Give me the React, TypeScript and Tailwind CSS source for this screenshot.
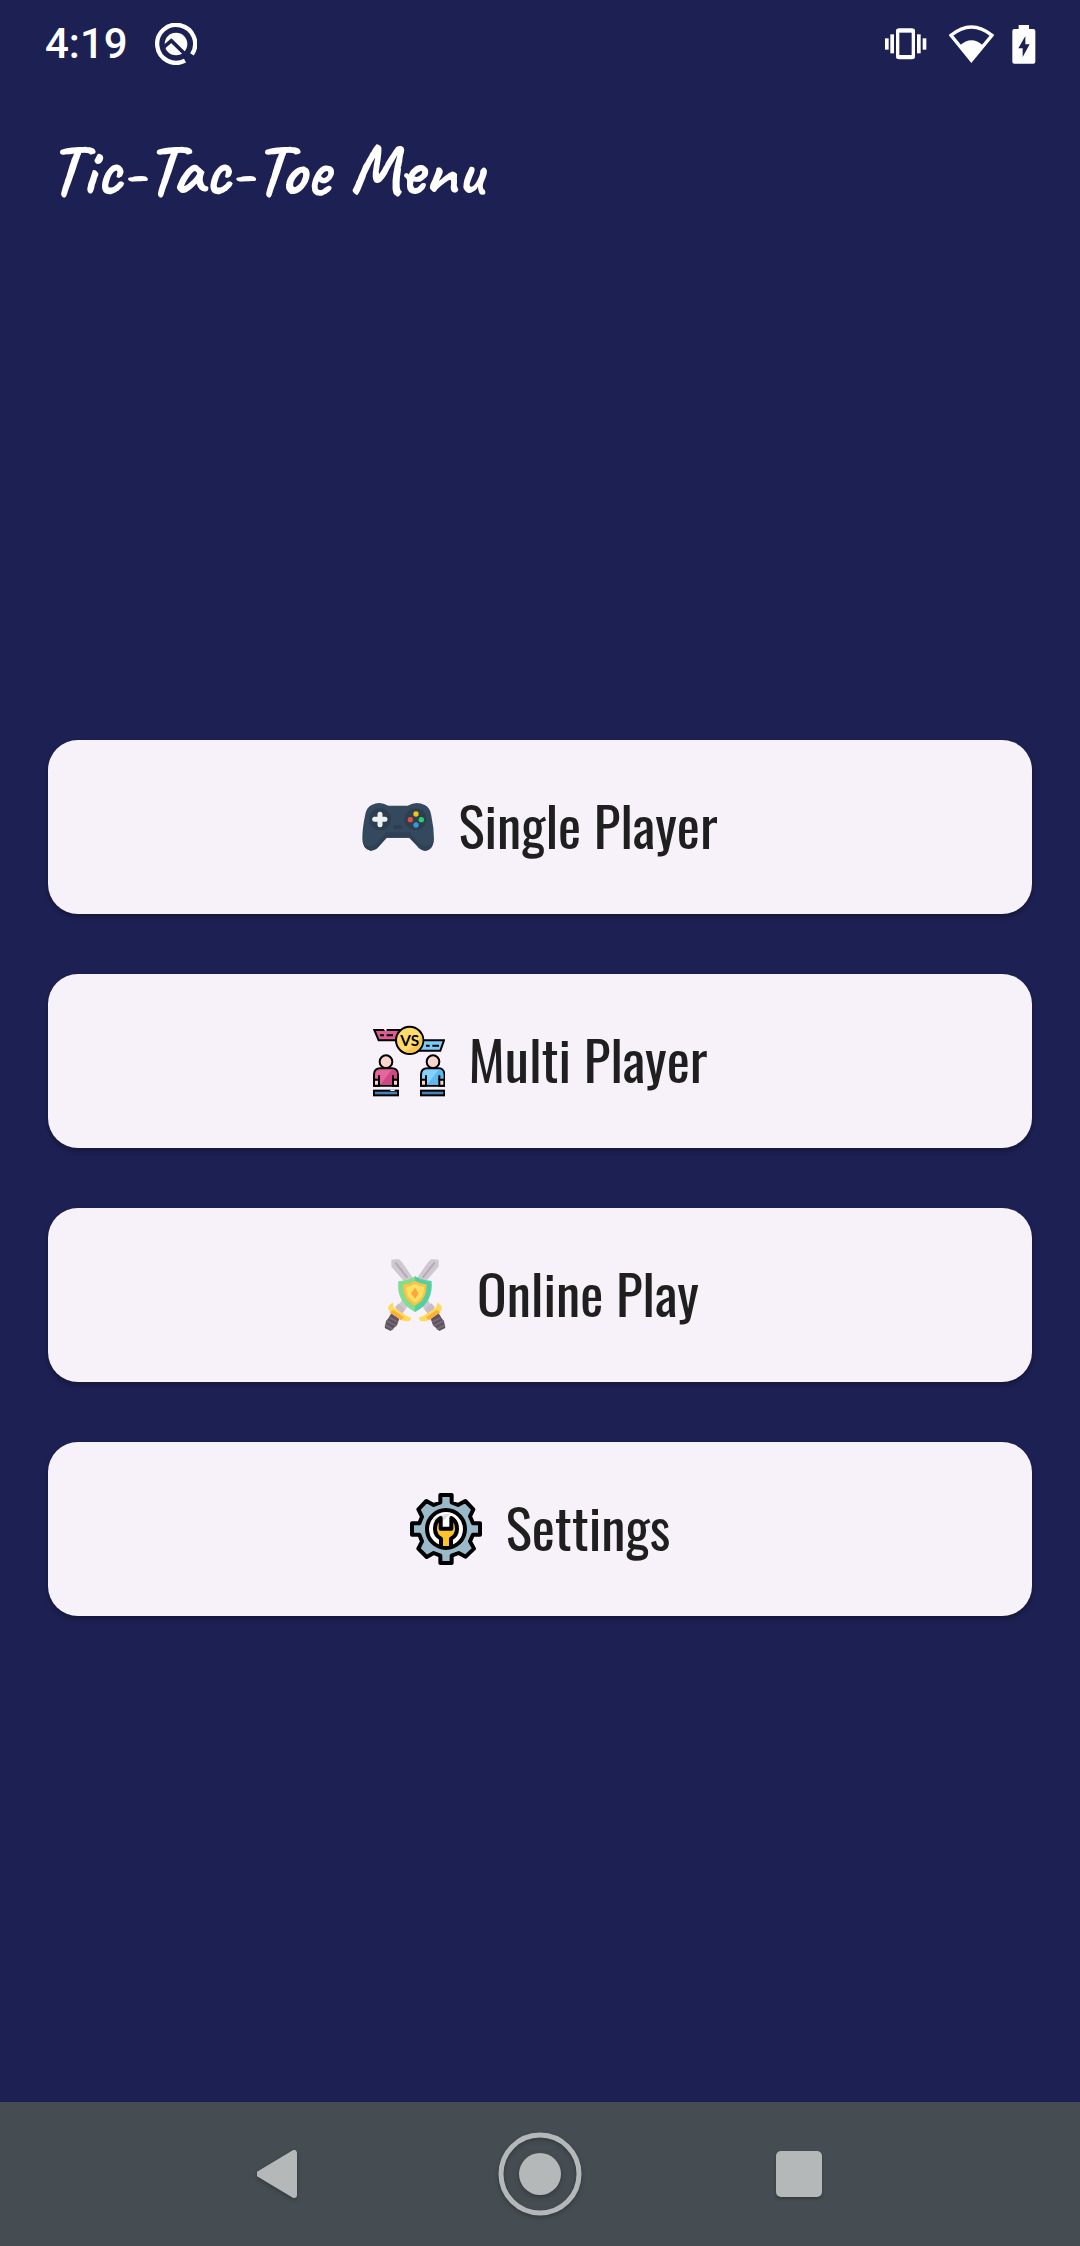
import type { ReactNode } from "react";

function AppNoticeIcon() {
  return (
    <svg className="size-[42px]" viewBox="375 35 126 126" aria-hidden="true">
      <path d="M465 148 A57 57 0 1 1 486 129" fill="none" stroke="#fff" strokeWidth="13" />
      <circle cx="438" cy="98" r="34" fill="#fff" />
      <path d="M397 111 L424 88 L474 137" fill="none" stroke="#1d2052" strokeWidth="11" />
    </svg>
  );
}

function VibrateIcon() {
  return (
    <svg className="h-8 w-[42px]" viewBox="75 53 126 96" fill="#fff" aria-hidden="true">
      <rect x="113" y="59" width="47" height="83" rx="5" fill="none" stroke="#fff" strokeWidth="10" />
      <rect x="110" y="56" width="53" height="11" />
      <rect x="110" y="134" width="53" height="11" />
      <rect x="75" y="84" width="11" height="34" />
      <rect x="91" y="72" width="11" height="57" />
      <rect x="171" y="72" width="11" height="57" />
      <rect x="188" y="84" width="11" height="34" />
    </svg>
  );
}

function WifiIcon() {
  return (
    <svg className="h-[38px] w-[45px]" viewBox="267 40 135 114" aria-hidden="true">
      <path d="M273 71 Q334 21 396 71 L334 146 Z" fill="none" stroke="#fff" strokeWidth="10" />
      <path d="M300 101 Q334 70 369 101 L334 151 Z" fill="#fff" />
    </svg>
  );
}

function BatteryIcon() {
  return (
    <svg className="h-[39px] w-6" viewBox="455 39 72 117" aria-hidden="true">
      <path d="M475 39 H506 V51 H519 Q525 51 525 57 V149 Q525 155 519 155 H462 Q456 155 456 149 V57 Q456 51 462 51 H475 Z" fill="#fff" />
      <path d="M495 72 L474 109 H487 V135 L508 97 H495 Z" fill="#1d2052" />
    </svg>
  );
}

function GamepadIcon() {
  return (
    <svg className="size-18" viewBox="38 18 216 216" aria-hidden="true">
      <path d="M67 60 Q91 47 117 62 H175 Q201 47 226 60 Q242 67 246 92 Q254 130 254 162 Q250 197 227 197 Q214 196 203 182 L180 158 H112 L89 184 Q78 197 64 197 Q40 194 39 160 Q39 130 47 92 Q51 67 67 60 Z" fill="#34495e" />
      <path d="M39 160 Q41 183 61 183 Q76 183 88 169 L111 142 H181 L204 169 Q215 183 229 183 Q251 180 254 160 Q252 197 227 197 Q213 196 203 182 L180 158 H112 L89 184 Q78 197 64 197 Q40 194 39 160 Z" fill="#2f4154" />
      <circle cx="92" cy="103" r="33" fill="#2c3e50" />
      <circle cx="199" cy="103" r="33" fill="#2c3e50" />
      <rect x="132" y="120" width="27" height="12" rx="6" fill="#2c3e50" />
      <path d="M92 88 V119 M76 103 H107" stroke="#ecf0f1" strokeWidth="15" strokeLinecap="round" />
      <circle cx="200" cy="87" r="8" fill="#f1c40f" />
      <circle cx="183" cy="104" r="8" fill="#e74c3c" />
      <circle cx="216" cy="104" r="8" fill="#2ecc71" />
      <circle cx="200" cy="120" r="8" fill="#3498db" />
    </svg>
  );
}

function VersusIcon() {
  return (
    <svg className="size-18" viewBox="36 30 216 216" aria-hidden="true">
      <g stroke="#000" strokeWidth="6">
        <path d="M40 45 H118 V76 H53 Z" fill="#db5b93" />
        <path d="M172 76 H249 L238 107 H172 Z" fill="#7acbf8" />
        <path d="M57 61 H69 M77 61 H96 M195 92 H206 M214 92 H234" fill="none" />
        <circle cx="146" cy="76" r="41" fill="#ffda6c" />
      </g>
      <path d="M70 41 L76 47" stroke="#f7f2f9" strokeWidth="6" />
      <path d="M180 58 A38 38 0 0 1 128 109 Q168 104 180 58" fill="#fbc34f" />
      <text x="146" y="92" textAnchor="middle" className="font-['Lato'] text-[46px] font-bold" fill="#000">VS</text>
      <g stroke="#000" strokeWidth="6">
        <path d="M39 212 V178 Q40 160 58 160 H92 Q110 160 111 178 V212 Z" fill="#e6659c" />
        <path d="M180 212 V178 Q181 160 199 160 H232 Q249 160 250 178 V212 Z" fill="#83d1ff" />
      </g>
      <path d="M94 163 Q108 164 108 178 V194 H97 V209 H58 Z" fill="#cf4785" />
      <path d="M234 163 Q247 164 247 178 V194 H236 V209 H198 Z" fill="#61b8ec" />
      <g fill="#fbd5cb" stroke="#000" strokeWidth="6">
        <circle cx="75" cy="140" r="19" />
        <circle cx="216" cy="140" r="19" />
        <path d="M39 194 H54 V212 H39 Z M96 194 H111 V212 H96 Z" />
        <path d="M180 194 H195 V212 H180 Z M235 194 H250 V212 H235 Z" />
        <path d="M54 181 V195 M96 181 V195 M195 181 V195 M235 181 V195" />
      </g>
      <g fill="#4582b5" stroke="#000" strokeWidth="6">
        <rect x="39" y="227" width="72" height="14" />
        <rect x="180" y="227" width="70" height="14" />
      </g>
      <path d="M88 226 H101" stroke="#f7f2f9" strokeWidth="4" />
    </svg>
  );
}

function Sword() {
  return (
    <g>
      <path d="M70 29 L92 27 L101 35 L135 84 L200 180 L180 193 L110 96 L70 50 Z" fill="#d0c8d1" />
      <path d="M82 38 L118 83" stroke="#b3aab5" strokeWidth="6" />
      <path d="M170 179 L190 160 L201 172 L182 191 Z" fill="#c7bdc9" />
      <path d="M188 206 L212 190 L222 206 L228 213 L232 234 L214 243 L207 236 L195 226 Z" fill="#5f535f" />
      <path d="M193 216 L217 203 M198 227 L226 212 M206 238 L231 225" stroke="#796c79" strokeWidth="5" />
      <path d="M152 203 L166 198 L205 172 L208 157 L220 168 L222 177 L211 190 L174 214 L157 213 Z" fill="#ffda59" />
      <path d="M174 202 L206 180 L217 187 L183 211 Z" fill="#fcae39" />
    </g>
  );
}

function SwordsIcon() {
  return (
    <svg className="size-18" viewBox="39 27 216 216" aria-hidden="true">
      <Sword />
      <g transform="matrix(-1 0 0 1 282 0)">
        <Sword />
      </g>
      <path d="M141 79 Q158 91 190 93 Q197 157 141 186 Q84 157 91 94 Q121 92 141 79 Z" fill="#84dc8e" />
      <path d="M141 79 Q158 91 190 93 Q197 157 141 186 V165 Q174 146 175 104 Q156 101 141 93 Z" fill="#54cfa2" />
      <path d="M141 93 Q156 102 175 104 Q178 146 141 167 Q103 146 106 104 Q126 102 141 93 Z" fill="#fcc343" />
      <path d="M141 101 Q154 109 168 111 Q169 143 141 158 Q113 143 114 111 Q130 109 141 101 Z" fill="#ffe065" />
      <path d="M141 113 L152 130 L141 147 L129 130 Z" fill="#fba93a" />
    </svg>
  );
}

function GearIcon() {
  return (
    <svg className="size-18" viewBox="30 30 216 216" aria-hidden="true">
      <path
        d="M121 36 H155 V58 L174 66 L196 54 L220 79 L210 100 L219 121 H240 V155 H219 L210 175 L222 197 L197 221 L176 210 L155 218 V240 H121 V218 L101 210 L80 222 L55 197 L66 175 L58 155 H36 V121 H58 L66 101 L55 79 L79 54 L101 66 L121 58 Z"
        fill="#9ab9c9"
        stroke="#000"
        strokeWidth="12"
        strokeLinejoin="round"
      />
      <circle cx="138" cy="138" r="57" fill="#fff" stroke="#000" strokeWidth="12" />
      <path d="M98 111 Q119 91 150 93 L120 123 Z" fill="#dedede" />
      <path
        d="M124 189 V169 Q104 158 104 138 Q104 116 122 105 V136 H154 V105 Q172 116 172 138 Q172 158 152 169 V189"
        fill="#fdc32b"
      />
      <path
        d="M123 190 V167 Q105 157 105 138 Q105 114 122 105 V137 H154 V105 Q171 114 171 138 Q171 157 153 167 V190"
        fill="none"
        stroke="#000"
        strokeWidth="12"
        strokeLinejoin="round"
      />
    </svg>
  );
}

function MenuButton({ icon, label }: { icon: ReactNode; label: string }) {
  return (
    <button
      type="button"
      className="flex h-[174px] w-full items-center justify-center gap-6 rounded-[30px] bg-[#f7f2f9] font-['Oswald','Roboto',sans-serif] text-[55px] leading-none text-[#1f1f1f] shadow-[0_3px_5px_rgba(0,0,0,0.3)]"
    >
      {icon}
      <span className="pb-1.5">{label}</span>
    </button>
  );
}

export default function App() {
  return (
    <div className="flex min-h-screen flex-col bg-[#1d2052] text-white">
      <div className="flex h-[88px] items-center justify-between pr-11 pl-[45px]">
        <div className="flex items-center gap-[27px]">
          <time className="font-['Roboto',sans-serif] text-[42px] leading-none font-medium">4:19</time>
          <AppNoticeIcon />
        </div>
        <div className="flex items-center">
          <VibrateIcon />
          <div className="ml-[22px] flex items-center gap-[18px]">
            <WifiIcon />
            <BatteryIcon />
          </div>
        </div>
      </div>
      <header className="flex h-[166px] items-center px-12">
        <h1 className="font-['Caveat','Lato',cursive] text-[72px] leading-none font-bold">Tic-Tac-Toe Menu</h1>
      </header>
      <main className="flex flex-1 flex-col justify-center gap-[60px] px-12">
        <MenuButton icon={<GamepadIcon />} label="Single Player" />
        <MenuButton icon={<VersusIcon />} label="Multi Player" />
        <MenuButton icon={<SwordsIcon />} label="Online Play" />
        <MenuButton icon={<GearIcon />} label="Settings" />
      </main>
      <nav aria-label="System navigation" className="flex h-36 items-center justify-center gap-[175px] bg-[#454d52]">
        <button type="button" aria-label="Back" className="flex size-[84px] items-center justify-center">
          <svg className="h-13 w-12 drop-shadow-[0_2px_2px_rgba(0,0,0,0.25)]" viewBox="0 0 48 52" aria-hidden="true">
            <path d="M2 26 L37 5 V47 Z" fill="#b4b8b9" stroke="#b4b8b9" strokeWidth="6" strokeLinejoin="round" overflow="visible" />
          </svg>
        </button>
        <button type="button" aria-label="Home" className="flex size-[84px] items-center justify-center">
          <svg className="size-[84px] drop-shadow-[0_2px_2px_rgba(0,0,0,0.25)]" viewBox="0 0 84 84" aria-hidden="true">
            <circle cx="42" cy="42" r="39" fill="none" stroke="#b4b8b9" strokeWidth="5" />
            <circle cx="42" cy="42" r="21" fill="#b4b8b9" />
          </svg>
        </button>
        <button type="button" aria-label="Recent apps" className="flex size-[84px] items-center justify-center">
          <span className="size-[46px] rounded-[5px] bg-[#b4b8b9] shadow-[0_2px_3px_rgba(0,0,0,0.25)]" />
        </button>
      </nav>
    </div>
  );
}
